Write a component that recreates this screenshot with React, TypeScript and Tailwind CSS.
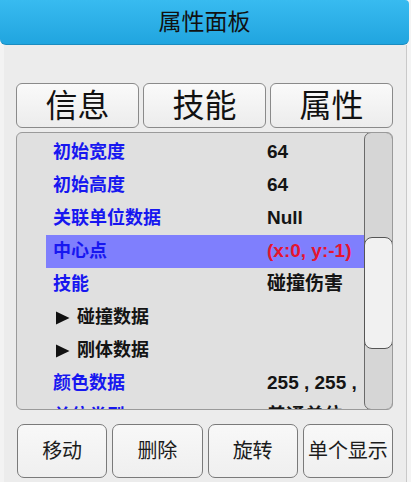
import React from 'react';

const font = { fontFamily: '"Liberation Sans", "Noto Sans CJK SC", sans-serif' };

type Row = { label: string; value?: string; kind: 'prop' | 'group'; active?: boolean };

const rows: Row[] = [
  { label: '初始宽度', value: '64', kind: 'prop' },
  { label: '初始高度', value: '64', kind: 'prop' },
  { label: '关联单位数据', value: 'Null', kind: 'prop' },
  { label: '中心点', value: '(x:0, y:-1)', kind: 'prop', active: true },
  { label: '技能', value: '碰撞伤害', kind: 'prop' },
  { label: '碰撞数据', kind: 'group' },
  { label: '刚体数据', kind: 'group' },
  { label: '颜色数据', value: '255 , 255 ,', kind: 'prop' },
  { label: '单位类型', value: '普通单位', kind: 'prop' },
];

const tabs = ['信息', '技能', '属性'];
const actions = ['移动', '删除', '旋转', '单个显示'];

export default function App() {
  return (
    <div className="w-[411px] h-[482px] bg-[#f4f4f4] overflow-hidden" style={font}>
      <div className="h-[45px] w-[409px] rounded-b-[6px] rounded-tr-[4px] bg-gradient-to-b from-[#38bbf0] to-[#20a5df] border-b border-[#1b8cc0] flex items-center justify-center">
        <span className="text-[23px] text-[#111] leading-none">属性面板</span>
      </div>
      <div className="w-[407px] h-[437px] bg-[#ececec] border-r border-[#c9c9c9] border-l-[4px] border-l-[#f3f3f3] pl-[12px] pr-[13px] pt-[38px] flex flex-col">
        <div className="grid grid-cols-3 gap-[4px] h-[45px]">
          {tabs.map((t) => (
            <div
              key={t}
              className="rounded-[6px] border border-[#8a8a8a] bg-gradient-to-b from-[#fafafa] to-[#ececec] flex items-center justify-center text-[32px] text-[#111] leading-none"
            >
              {t}
            </div>
          ))}
        </div>
        <div className="mt-[4px] h-[278px] rounded-[6px] border border-[#9a9a9a] bg-[#e0e0e0] flex overflow-hidden">
          <div className="flex-1 overflow-hidden pt-[3px] pl-[29px]">
            {rows.map((r) => (
              <div
                key={r.label}
                className={`h-[33px] flex items-center text-[18px] font-bold whitespace-nowrap ${r.active ? 'bg-[#7f7ffd]' : ''}`}
              >
                {r.kind === 'prop' ? (
                  <>
                    <span className="w-[221px] shrink-0 pl-[7px] text-[#1717f0]">{r.label}</span>
                    <span className={`text-[19px] ${r.active ? 'text-[#e5152f]' : 'text-[#141414]'}`}>{r.value}</span>
                  </>
                ) : (
                  <span className="pl-[9px] text-[#141414] flex items-center gap-[7px]">
                    <svg width="15" height="14" viewBox="0 0 15 14">
                      <path d="M1 0.5 L14.5 7 L1 13.5 Z" fill="#111" />
                    </svg>
                    {r.label}
                  </span>
                )}
              </div>
            ))}
          </div>
          <div className="w-[29px] shrink-0 bg-[#d6d6d6] border border-[#6a6a6a] rounded-[7px] pt-[104px] -mr-px -my-px">
            <div className="h-[112px] -mx-px bg-[#f1f1f1] border border-[#555] rounded-[8px]" />
          </div>
        </div>
        <div className="mt-[14px] grid grid-cols-4 gap-[5px] h-[54px] pl-[1px]">
          {actions.map((a) => (
            <div
              key={a}
              className="rounded-[7px] border border-[#7a7a7a] bg-gradient-to-b from-[#f8f8f8] to-[#efefef] flex items-center justify-center text-[20px] text-[#1c1c1c] leading-none whitespace-nowrap"
            >
              {a}
            </div>
          ))}
        </div>
      </div>
    </div>
  );
}
